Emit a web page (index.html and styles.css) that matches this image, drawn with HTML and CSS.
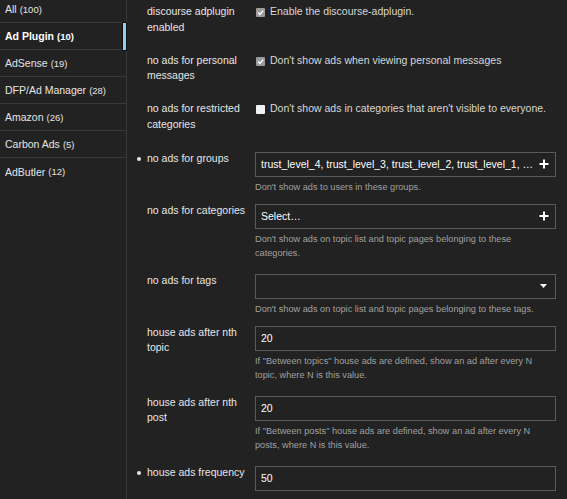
FILE: index.html
```html
<!DOCTYPE html>
<html lang="en">
<head>
  <meta charset="UTF-8" />
  <title>Ad Plugin settings</title>
  <link rel="stylesheet" href="styles.css">
</head>
<body>
<div class="page">
  <aside class="sidebar">
    <ul class="cats">
      <li><a href="#">All <span class="count">(100)</span></a></li>
      <li class="active"><a href="#">Ad Plugin <span class="count">(10)</span></a></li>
      <li><a href="#">AdSense <span class="count">(19)</span></a></li>
      <li><a href="#">DFP/Ad Manager <span class="count">(28)</span></a></li>
      <li><a href="#">Amazon <span class="count">(26)</span></a></li>
      <li><a href="#">Carbon Ads <span class="count">(5)</span></a></li>
      <li><a href="#">AdButler <span class="count">(12)</span></a></li>
    </ul>
  </aside>

  <main class="settings">
    <div class="setting bool">
      <div class="setting-label">discourse adplugin enabled</div>
      <div class="setting-value">
        <label class="check"><span class="box checked"></span>Enable the discourse-adplugin.</label>
      </div>
    </div>

    <div class="setting bool">
      <div class="setting-label">no ads for personal messages</div>
      <div class="setting-value">
        <label class="check"><span class="box checked"></span>Don't show ads when viewing personal messages</label>
      </div>
    </div>

    <div class="setting bool">
      <div class="setting-label">no ads for restricted categories</div>
      <div class="setting-value">
        <label class="check"><span class="box"></span>Don't show ads in categories that aren't visible to everyone.</label>
      </div>
    </div>

    <div class="setting">
      <div class="setting-label overridden">no ads for groups</div>
      <div class="setting-value">
        <div class="field">
          <span class="field-text">trust_level_4, trust_level_3, trust_level_2, trust_level_1, …</span>
          <svg class="icon" width="10" height="10" viewBox="0 0 10 10"><path d="M5 0.5v9M0.5 5h9" stroke="#fff" stroke-width="2"/></svg>
        </div>
        <div class="desc">Don't show ads to users in these groups.</div>
      </div>
    </div>

    <div class="setting tall">
      <div class="setting-label">no ads for categories</div>
      <div class="setting-value">
        <div class="field">
          <span class="field-text">Select…</span>
          <svg class="icon" width="10" height="10" viewBox="0 0 10 10"><path d="M5 0.5v9M0.5 5h9" stroke="#fff" stroke-width="2"/></svg>
        </div>
        <div class="desc">Don't show ads on topic list and topic pages belonging to these categories.</div>
      </div>
    </div>

    <div class="setting">
      <div class="setting-label">no ads for tags</div>
      <div class="setting-value">
        <div class="field">
          <span class="field-text"></span>
          <svg class="icon caret" width="7" height="4" viewBox="0 0 7 4"><path d="M0 0h7L3.5 4z" fill="#fff"/></svg>
        </div>
        <div class="desc">Don't show ads on topic list and topic pages belonging to these tags.</div>
      </div>
    </div>

    <div class="setting tall">
      <div class="setting-label">house ads after nth topic</div>
      <div class="setting-value">
        <div class="field"><span class="field-text">20</span></div>
        <div class="desc">If "Between topics" house ads are defined, show an ad after every N topic, where N is this value.</div>
      </div>
    </div>

    <div class="setting tall">
      <div class="setting-label">house ads after nth post</div>
      <div class="setting-value">
        <div class="field"><span class="field-text">20</span></div>
        <div class="desc">If "Between posts" house ads are defined, show an ad after every N posts, where N is this value.</div>
      </div>
    </div>

    <div class="setting">
      <div class="setting-label overridden">house ads frequency</div>
      <div class="setting-value">
        <div class="field"><span class="field-text">50</span></div>
      </div>
    </div>
  </main>
</div>
</body>
</html>
```

FILE: styles.css
```css
* {
  margin: 0;
  padding: 0;
  box-sizing: border-box;
}

html, body {
  height: 100%;
  background: #222222;
  color: #dddddd;
  font-family: "Liberation Sans", Arial, sans-serif;
  font-size: 10.5px;
}

.page {
  display: flex;
  height: 499px;
  overflow: hidden;
}

/* categorie links */
.sidebar {
  width: 127px;
  flex-shrink: 0;
  border-right: 1px solid #383838;
}

.cats {
  list-style: none;
  margin-top: -4px;
}

.cats li {
  height: 27px;
  border-bottom: 1px solid #383838;
  position: relative;
}

.cats li:last-child {
  border-bottom: none;
}

.cats a {
  display: flex;
  align-items: center;
  gap: 3px;
  height: 100%;
  padding-left: 5px;
  color: #e4e4e4;
  text-decoration: none;
}

.cats .count {
  font-size: 9.5px;
}

.cats li.active a {
  font-weight: bold;
  color: #ffffff;
}

.cats li.active::after {
  content: "";
  position: absolute;
  right: 0;
  top: 0;
  width: 3px;
  height: 27px;
  background: #94cbf0;
  box-shadow: 0 0 0 1px #111;
}

/* settings */
.settings {
  flex: 1;
  padding: 4px 11px 0 10px;
}

.setting {
  display: flex;
  align-items: flex-start;
  margin-bottom: 10px;
}

.setting.tall {
  margin-bottom: 14px;
}

.setting.bool {
  margin-bottom: 17.5px;
}

/* margins collapse, so this one wins over the 17.5 above */
.setting.bool + .setting:not(.bool) {
  margin-top: 19.5px;
}

.setting-label {
  width: 118px;
  flex-shrink: 0;
  padding: 0 8px 0 10px;
  line-height: 15.5px;
  color: #e6e6e6;
  position: relative;
}

.setting:not(.bool) .setting-label {
  margin-top: -1px;
}

.setting-label.overridden::before {
  content: "";
  position: absolute;
  left: 0;
  top: 6px;
  width: 4px;
  height: 4px;
  border-radius: 50%;
  background: #e6e6e6;
}

.setting-value {
  flex: 1;
}

.check {
  display: flex;
  align-items: flex-start;
  gap: 5px;
  line-height: 15.5px;
  color: #d8d8d8;
}

.box {
  width: 9px;
  height: 9px;
  margin: 4px 0 0 1px;
  border-radius: 1px;
  background: #f2f2f2;
  flex-shrink: 0;
}

.box.checked {
  background: #9b9b9b url("data:image/svg+xml;utf8,<svg xmlns='http://www.w3.org/2000/svg' width='9' height='9'><path d='M2 4.6l1.8 1.8L7.2 2.6' fill='none' stroke='white' stroke-width='1.4'/></svg>") center no-repeat;
}

.field {
  height: 25px;
  border: 1px solid #5a5a5a;
  background: #222222;
  display: flex;
  align-items: center;
  justify-content: space-between;
  padding: 0 5px 0 5px;
  font-size: 10.5px;
  color: #ffffff;
}

.field .icon {
  margin-right: 1px;
}

.field .caret {
  margin-right: 3px;
}

.desc {
  max-width: 288px;
  margin-top: 3px;
  font-size: 9.2px;
  line-height: 14px;
  color: #a0a0a0;
}
```
